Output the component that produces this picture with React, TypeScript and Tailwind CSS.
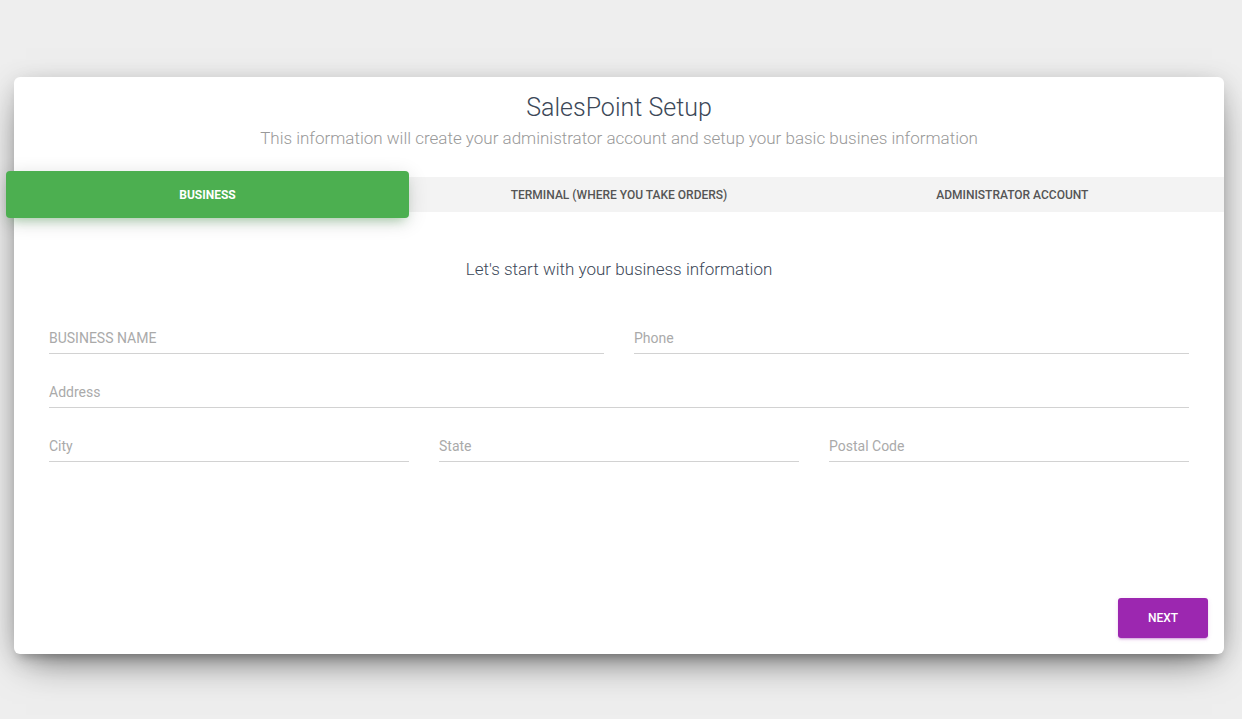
import React from "react";

const tabs = ["Business", "Terminal (where you take orders)", "Administrator account"];

function Field({ label }: { label: string }) {
  return (
    <div className="h-[36px] flex items-end border-b border-[#d2d2d2]">
      <span className="text-[14px] leading-[20px] pb-[5px] text-[#aaaaaa]">{label}</span>
    </div>
  );
}

export default function App() {
  return (
    <div className="min-h-[719px] bg-[#eeeeee] pt-[77px] font-['Roboto',sans-serif]">
      <div className="relative ml-[14px] w-[1210px] h-[577px] bg-white rounded-[6px] flex flex-col shadow-[0_16px_38px_-12px_rgba(0,0,0,0.56),0_4px_25px_0_rgba(0,0,0,0.12),0_8px_10px_-5px_rgba(0,0,0,0.2)]">
        {/* Header */}
        <div className="pt-[13px] text-center">
          <h3 className="text-[25px] leading-[35px] font-light text-[#3c4858]">SalesPoint Setup</h3>
          <h5 className="mt-[1px] text-[17px] leading-[24px] font-light text-[#999999]">
            This information will create your administrator account and setup your basic busines information
          </h5>
        </div>

        {/* Tabs */}
        <div className="relative mt-[27px] h-[35px] bg-[#f3f3f3]">
          <div className="grid grid-cols-3 h-full px-[15px]">
            {tabs.map((t, i) => (
              <div
                key={t}
                className="flex items-center justify-center text-[12px] font-medium uppercase text-[#555555]"
              >
                {i === 0 ? null : t}
              </div>
            ))}
          </div>
          {/* moving tab over the active step */}
          <div className="absolute left-[-8px] top-[-6px] w-[403px] h-[47px] rounded-[4px] bg-[#4caf50] flex items-center justify-center text-[12px] font-bold uppercase text-white shadow-[0_4px_20px_0_rgba(0,0,0,0.14),0_7px_10px_-5px_rgba(76,175,80,0.4)]">
            {tabs[0]}
          </div>
        </div>

        {/* Form */}
        <div className="px-[35px]">
          <h4 className="mt-[45px] text-center text-[17px] leading-[24px] font-light text-[#3c4858]">
            Let's start with your business information
          </h4>
          <div className="mt-[37px] flex flex-col gap-[18px]">
            <div className="grid grid-cols-2 gap-[30px]">
              <Field label="BUSINESS NAME" />
              <Field label="Phone" />
            </div>
            <Field label="Address" />
            <div className="grid grid-cols-3 gap-[30px]">
              <Field label="City" />
              <Field label="State" />
              <Field label="Postal Code" />
            </div>
          </div>
        </div>

        {/* Footer */}
        <div className="mt-auto flex justify-end p-[16px]">
          <button className="w-[90px] h-[40px] rounded-[3px] bg-[#9c27b0] text-white text-[12px] font-medium uppercase shadow-[0_2px_2px_0_rgba(156,39,176,0.14),0_3px_1px_-2px_rgba(156,39,176,0.2),0_1px_5px_0_rgba(156,39,176,0.12)]">
            Next
          </button>
        </div>
      </div>
    </div>
  );
}
